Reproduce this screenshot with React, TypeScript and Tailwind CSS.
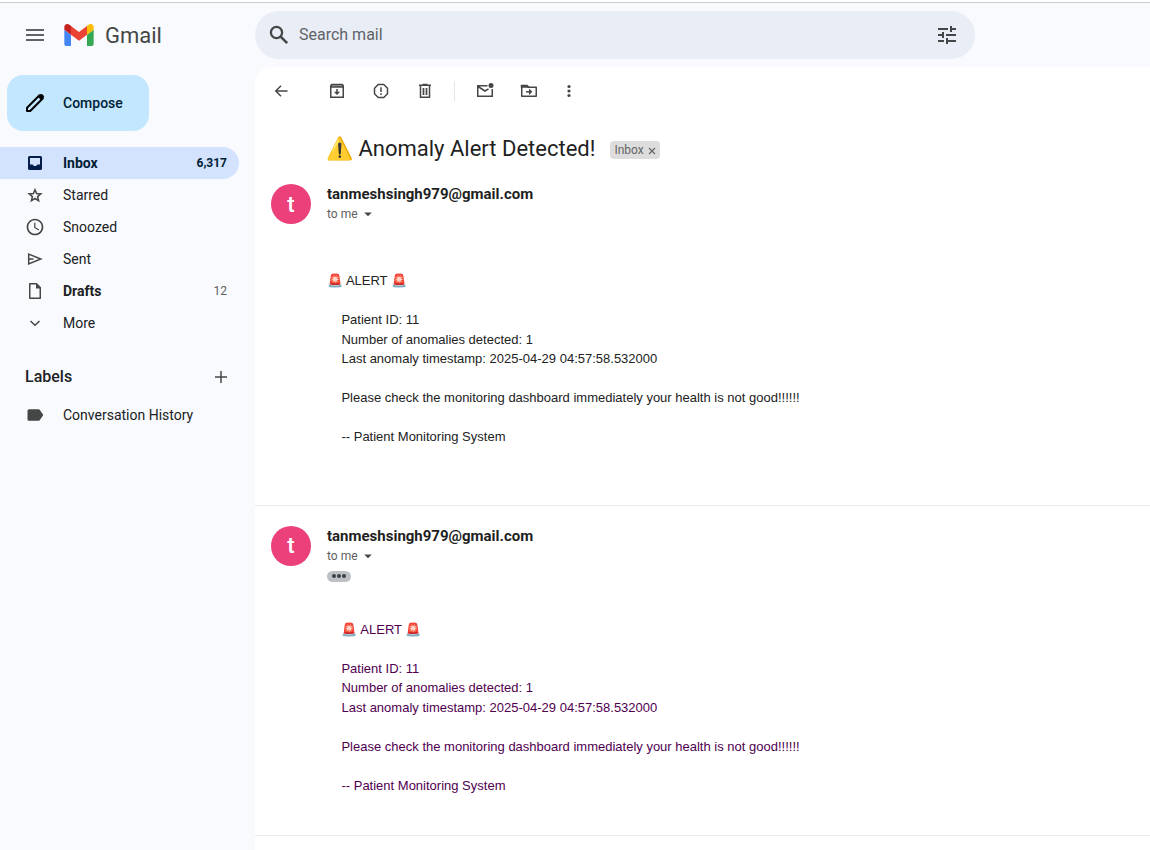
import type { ReactNode } from "react";
import { MdMenu, MdTune, MdSchedule, MdLabel, MdArrowDropDown } from "react-icons/md";

const ui = "font-[Roboto,'Liberation_Sans',sans-serif]";

function Svg({ children, className = "size-5" }: { children: ReactNode; className?: string }) {
  return (
    <svg viewBox="0 0 20 20" className={className} fill="none" stroke="currentColor" strokeWidth="1.5" aria-hidden="true">
      {children}
    </svg>
  );
}

function GmailLogo() {
  return (
    <svg viewBox="52 42 88 66" className="h-[22px] w-[30px]" aria-hidden="true">
      <path fill="#4285f4" d="M58 108h14V74L52 59v43c0 3.320 2.690 6 6 6" />
      <path fill="#34a853" d="M120 108h14c3.320 0 6-2.690 6-6V59l-20 15" />
      <path fill="#fbbc04" d="M120 48v26l20-15v-8c0-7.420-8.470-11.650-14.400-7.200" />
      <path fill="#ea4335" d="M72 74V48l24 18 24-18v26L96 92" />
      <path fill="#c5221f" d="M52 51v8l20 15V48l-5.600-4.200C60.470 39.350 52 43.580 52 51" />
    </svg>
  );
}

const icons = {
  inbox: (
    <Svg>
      <path fill="currentColor" stroke="none" fillRule="evenodd" d="M4.500 3h11A1.500 1.500 0 0 1 17 4.500v11a1.500 1.500 0 0 1-1.500 1.500h-11A1.500 1.500 0 0 1 3 15.500v-11A1.500 1.500 0 0 1 4.500 3ZM5 5v6.500h2.500L9 13h2l1.500-1.500H15V5Z" />
    </Svg>
  ),
  star: (
    <Svg>
      <path d="m10 4.700 1.600 3.900 4.200.3-3.200 2.700 1 4.100-3.600-2.200-3.600 2.200 1-4.100-3.200-2.700 4.200-.3Z" />
    </Svg>
  ),
  clock: <MdSchedule className="size-5" />,
  send: (
    <Svg>
      <path d="M3.700 5.100 15.800 10 3.700 14.900ZM3.700 10H8.500" />
    </Svg>
  ),
  draft: (
    <Svg>
      <path d="M5 2.750h6.500L15.250 6.500v10.750H4.750V2.750Z" strokeLinejoin="round" />
      <path d="M11 2.500v5h5Z" fill="currentColor" stroke="none" />
    </Svg>
  ),
  more: (
    <Svg>
      <path d="m5.500 8 4.500 4.300L14.500 8" />
    </Svg>
  ),
};

const folders = [
  { label: "Inbox", count: "6,317", icon: icons.inbox, active: true, bold: true },
  { label: "Starred", icon: icons.star },
  { label: "Snoozed", icon: icons.clock },
  { label: "Sent", icon: icons.send },
  { label: "Drafts", count: "12", icon: icons.draft, bold: true },
  { label: "More", icon: icons.more },
];

function NavRow({ label, icon, count, active, bold }: { label: string; icon: ReactNode; count?: string; active?: boolean; bold?: boolean }) {
  return (
    <a
      href="#"
      className={`flex h-8 items-center rounded-r-full pr-3 pl-[25px] text-sm ${active ? "bg-[#d3e3fd] text-[#001d35]" : "text-[#202124]"}`}
    >
      <span className={`flex w-[38px] items-center ${active ? "text-[#041e49]" : "text-[#444746]"}`}>
        <span className="flex w-5 justify-center">{icon}</span>
      </span>
      <span className={`flex-1 ${bold ? "font-bold" : ""}`}>{label}</span>
      {count && <span className={`text-xs ${active ? "font-bold" : "text-[#5e5e5e]"}`}>{count}</span>}
    </a>
  );
}

function ToolButton({ label, children }: { label: string; children: ReactNode }) {
  return (
    <button type="button" aria-label={label} className="flex size-5 items-center justify-center">
      {children}
    </button>
  );
}

function Toolbar() {
  return (
    <div className="flex h-12 items-center gap-6 pl-4 text-[#444746]">
      <div className="mr-3">
        <ToolButton label="Back to Inbox">
          <Svg>
            <path d="M16.500 10H5.500M10 4.800 4.800 10l5.200 5.200" />
          </Svg>
        </ToolButton>
      </div>
      <ToolButton label="Archive">
        <Svg>
          <path d="M3.750 6v10.250h12.500V6" />
          <path d="M4.700 3.500h10.600l1 1.500v1H3.700V5Z" fill="#9a9c9b" strokeLinejoin="round" />
          <path d="M10 8v4" />
          <path d="M6.900 10.700h6.200L10 13.900Z" fill="currentColor" stroke="none" />
        </Svg>
      </ToolButton>
      <ToolButton label="Report spam">
        <Svg>
          <path d="M7.200 3.500h5.600l3.700 3.700v5.600l-3.700 3.700H7.200l-3.700-3.700V7.200Z" strokeLinejoin="round" />
          <path d="M10 6.200v4.800M10 12.300v1.600" />
        </Svg>
      </ToolButton>
      <ToolButton label="Delete">
        <Svg>
          <path d="M4 4.250h12M7.500 3.500h5M5.500 4.500v11.750h9V4.500" />
          <path d="M8.500 7v7M11.500 7v7" strokeWidth="1.700" />
        </Svg>
      </ToolButton>
      <div className="-mr-1 -ml-[5px] h-5 w-px bg-[#e6e6e6]" />
      <ToolButton label="Mark as unread">
        <Svg>
          <path d="M12.500 4.750H2.750v10.500h14.500V8M3 5.500l7 4.500 3.500-2.200" />
          <circle cx="16" cy="4.500" r="2.500" fill="currentColor" stroke="none" />
        </Svg>
      </ToolButton>
      <ToolButton label="Move to">
        <Svg>
          <path d="M2.750 15.250V4.750h5l1.500 1.500h8v9Z" strokeLinejoin="round" />
          <path d="M2.500 4.500h5.500l1.500 1.500h-7Z" fill="currentColor" />
          <path d="M7 10.800h4" />
          <path d="M10 7.600v6.400l3.400-3.200Z" fill="currentColor" stroke="none" />
        </Svg>
      </ToolButton>
      <div className="-ml-1">
        <ToolButton label="More options">
          <Svg>
            <g fill="currentColor" stroke="none">
              <circle cx="10" cy="5.500" r="1.600" />
              <circle cx="10" cy="10" r="1.600" />
              <circle cx="10" cy="14.500" r="1.600" />
            </g>
          </Svg>
        </ToolButton>
      </div>
    </div>
  );
}

const alertLines = `    Patient ID: 11
    Number of anomalies detected: 1
    Last anomaly timestamp: 2025-04-29 04:57:58.532000

    Please check the monitoring dashboard immediately your health is not good!!!!!!

    -- Patient Monitoring System`;

function Message({ quoted }: { quoted?: boolean }) {
  return (
    <article className={`flex gap-4 border-b border-[#e8eaed] pl-4 ${quoted ? "pt-5 pb-10" : "pt-[13px] pb-[58px]"}`}>
      <div className="flex size-10 shrink-0 items-center justify-center rounded-full bg-[#ec407a] text-[22px] font-medium text-white">t</div>
      <div className="min-w-0 flex-1">
        <h3 className="text-[15px] leading-5 font-bold text-[#1f1f1f]">tanmeshsingh979@gmail.com</h3>
        <button type="button" className="flex h-5 items-center text-xs text-[#5e5e5e]">
          to me
          <MdArrowDropDown className="ml-px size-[18px] text-[#444746]" />
        </button>
        {quoted && (
          <button type="button" aria-label="Show trimmed content" className="mt-[5px] flex h-[11px] w-6 items-center justify-center gap-px rounded-full bg-[#bdc1c6]">
            <span className="size-1 rounded-full bg-[#3c4043]" />
            <span className="size-1 rounded-full bg-[#3c4043]" />
            <span className="size-1 rounded-full bg-[#3c4043]" />
          </button>
        )}
        <div
          className={`font-['Liberation_Sans',Arial,sans-serif] text-[13px] leading-normal whitespace-pre-wrap ${quoted ? "pt-[38px] text-[#500050]" : "pt-[47px] text-[#222222]"}`}
        >
          {(quoted ? "    " : "") + "🚨 ALERT 🚨\n\n" + alertLines}
        </div>
      </div>
    </article>
  );
}

export default function App() {
  return (
    <div className={`flex min-h-screen flex-col bg-[#f8fafd] ${ui}`}>
      <div className="h-[2px] bg-white" />
      <header className="flex h-[65px] border-t border-[#c9cbce]">
        <div className="flex w-[255px] shrink-0 items-center pl-[23px]">
          <button type="button" aria-label="Main menu" className="text-[#5f6368]">
            <MdMenu className="size-6" />
          </button>
          <a href="#" className="ml-[17px] flex items-center gap-[11px] text-[22px] text-[#444746]">
            <GmailLogo />
            Gmail
          </a>
        </div>
        <form className="mt-2 flex h-12 w-full max-w-[720px] items-center rounded-full bg-[#e9eef6] px-4 pb-px text-[#444746]">
          <svg viewBox="0 0 24 24" className="-ml-1 size-6" fill="none" stroke="currentColor" strokeWidth="2.300" aria-hidden="true">
            <circle cx="9.500" cy="9.500" r="5.600" />
            <path d="m13.600 13.600 6.600 6.600" strokeWidth="2.600" />
          </svg>
          <input aria-label="Search mail" placeholder="Search mail" className="ml-2 flex-1 bg-transparent outline-none placeholder:text-[#5f6368]" />
          <button type="button" aria-label="Show search options">
            <MdTune className="size-6" />
          </button>
        </form>
      </header>

      <div className="flex flex-1">
        <aside className="w-[255px] shrink-0 pt-2">
          <button type="button" className="ml-[7px] flex h-14 w-[142px] items-center rounded-2xl bg-[#c2e7ff] pl-4 text-sm font-medium text-[#001d35]">
            <svg viewBox="0 0 24 24" className="mr-4 size-6" fill="none" stroke="#000" strokeWidth="2" aria-hidden="true">
              <path d="M4 20v-3.200L16.500 4.300l3.200 3.200L7.200 20Z" strokeLinejoin="round" />
              <path d="m14.500 5.500 2.400-2.100q1.400-1 2.700.1l.9.900q1.200 1.400.1 2.700L18.500 9.500Z" fill="#000" stroke="none" />
            </svg>
            Compose
          </button>
          <nav className="mt-4 mr-4">
            {folders.map((f) => (
              <NavRow key={f.label} {...f} />
            ))}
          </nav>
          <div className="mt-[22px] mr-6 flex h-8 items-center justify-between pl-[25px]">
            <h2 className="text-base font-medium text-[#202124]">Labels</h2>
            <button type="button" aria-label="Create new label" className="text-[#444746]">
              <Svg>
                <path d="M10 4v12M4 10h12" />
              </Svg>
            </button>
          </div>
          <nav className="mt-[6px] mr-4">
            <NavRow label="Conversation History" icon={<MdLabel className="size-5" />} />
          </nav>
        </aside>

        <main className="min-w-0 flex-1 rounded-tl-2xl bg-white">
          <Toolbar />
          <div className="flex h-14 items-center gap-[15px] pt-[10px] pl-[71px]">
            <h1 className="text-[22px] text-[#1f1f1f]">⚠️ Anomaly Alert Detected!</h1>
            <span className="mt-1 flex h-[18px] items-center gap-1 rounded bg-[#dddddd] px-1 text-xs text-[#666666]">
              Inbox
              <button type="button" aria-label="Remove label Inbox" className="mt-[2px]">
                <svg viewBox="0 0 8 8" className="size-2" stroke="currentColor" strokeWidth="1.200" aria-hidden="true">
                  <path d="m1 1 6 6M7 1 1 7" />
                </svg>
              </button>
            </span>
          </div>
          <Message />
          <Message quoted />
        </main>
      </div>
    </div>
  );
}
